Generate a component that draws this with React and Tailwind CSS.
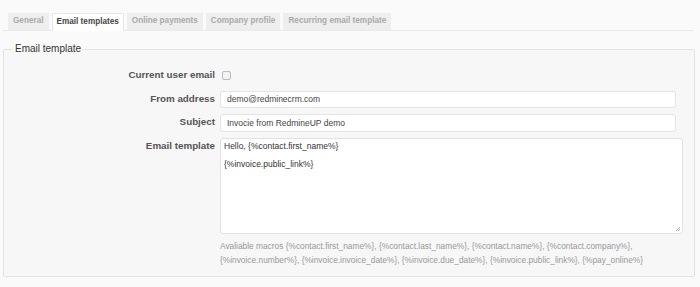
import React from 'react';

const tabs = ['General', 'Email templates', 'Online payments', 'Company profile', 'Recurring email template'];

const App = () => {
    const active = 'Email templates';

    return (
        <div className="w-[700px] h-[287px] bg-[#fafafa] overflow-hidden" style={{ fontFamily: '"Liberation Sans", Arial, sans-serif' }}>
            <div className="pt-[13px] px-[3px]">
                <div className="flex gap-[3px] pl-[5px] border-b border-[#eaeaea] mr-[4px]">
                    {tabs.map(tab => (
                        <div
                            key={tab}
                            className={`h-[17px] flex items-center text-[8.2px] font-bold leading-none ${tab === active ? 'px-[4px] bg-white text-[#444] border border-b-0 border-[#e6e6e6] -mb-px h-[18px]' : 'px-[5px] bg-[#eeeeee] text-[#aaaaaa]'}`}
                        >
                            {tab}
                        </div>
                    ))}
                </div>
            </div>

            <fieldset className="mx-[3px] mr-[5px] mt-[11px] h-[235px] border border-[#e2e2e2] rounded-[2px] bg-[#f7f7f7] px-[8px]">
                <legend className="px-[3px] text-[10px] text-[#333] leading-[14px]">Email template</legend>

                <div className="flex flex-col pt-[11px]">
                    <div className="flex items-center h-[17px]">
                        <label className="w-[208px] text-right pr-[5px] text-[9.8px] font-bold text-[#555]">Current user email</label>
                        <span className="ml-[2px] w-[9px] h-[9px] border border-[#bbb] rounded-[2px] bg-[#f3f3f3]"></span>
                    </div>

                    <div className="flex items-start mt-[7px]">
                        <label className="w-[208px] text-right pr-[5px] pt-[1px] text-[9.8px] font-bold text-[#555] leading-[14px]">From address</label>
                        <div className="w-[456px] h-[17px] bg-white border border-[#e4e4e4] rounded-[3px] flex items-center px-[6px] text-[8.5px] text-[#444]">demo@redminecrm.com</div>
                    </div>

                    <div className="flex items-start mt-[6px]">
                        <label className="w-[208px] text-right pr-[5px] pt-[1px] text-[9.8px] font-bold text-[#555] leading-[14px]">Subject</label>
                        <div className="w-[456px] h-[18px] bg-white border border-[#e4e4e4] rounded-[3px] flex items-center px-[6px] text-[8.5px] text-[#444]">Invocie from RedmineUP demo</div>
                    </div>

                    <div className="flex items-start mt-[6px]">
                        <label className="w-[208px] text-right pr-[5px] pt-[1px] text-[9.8px] font-bold text-[#555] leading-[14px]">Email template</label>
                        <div>
                            <div className="relative w-[463px] h-[96px] bg-white border border-[#e2e2e2] rounded-[3px] px-[3px] pt-[2px] text-[8.5px] text-[#333] leading-[11px]">
                                <p>Hello, {'{%contact.first_name%}'}</p>
                                <p className="mt-[7px]">{'{%invoice.public_link%}'}</p>
                                <svg className="absolute right-[1px] bottom-[1px]" width="6" height="6" viewBox="0 0 6 6">
                                    <path d="M1 5 L5 1 M3 5 L5 3" stroke="#999" strokeWidth="0.8" />
                                </svg>
                            </div>
                            <div className="mt-[5px] text-[8.35px] text-[#999] leading-[14px]">
                                <p>Avaliable macros {'{%contact.first_name%}, {%contact.last_name%}, {%contact.name%}, {%contact.company%},'}</p>
                                <p>{'{%invoice.number%}, {%invoice.invoice_date%}, {%invoice.due_date%}, {%invoice.public_link%}, {%pay_online%}'}</p>
                            </div>
                        </div>
                    </div>
                </div>
            </fieldset>
        </div>
    );
};

export default App;
